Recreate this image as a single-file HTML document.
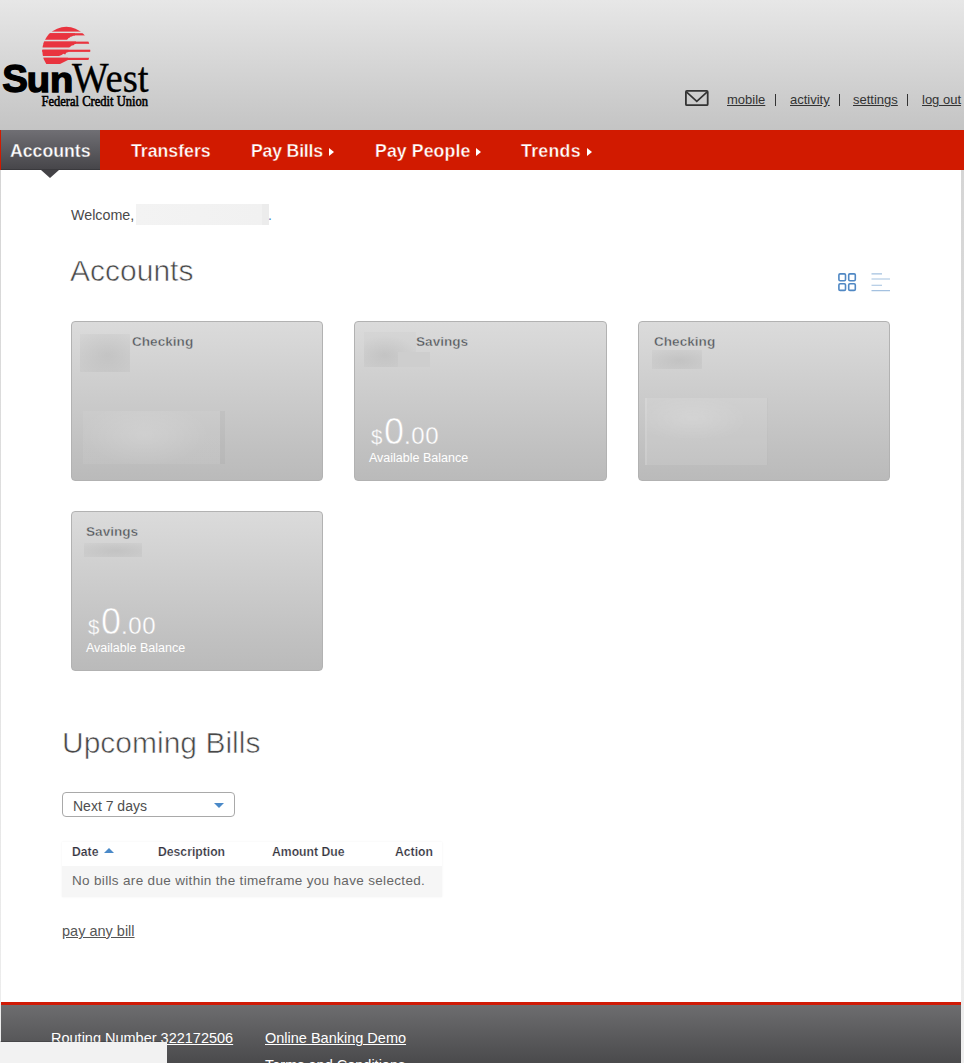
<!DOCTYPE html>
<html><head><meta charset="utf-8">
<style>
*{box-sizing:border-box;margin:0;padding:0}
html,body{width:964px;height:1063px;overflow:hidden;background:#f0f0f0;font-family:"Liberation Sans",sans-serif}
.a{position:absolute;white-space:nowrap}
#hdr{left:0;top:0;width:964px;height:130px;background:linear-gradient(#e7e7e7,#c4c4c4)}
#nav{left:0;top:130px;width:964px;height:40px;background:#d11a00}
#act{left:1px;top:130px;width:99px;height:40px;background:linear-gradient(#706f74,#47464a);border-bottom:1px solid #3a393d}
#arrow{left:41px;top:170px;width:0;height:0;border-left:9px solid transparent;border-right:9px solid transparent;border-top:8px solid #444347}
.nv{color:#fff;font-weight:bold;font-size:17.7px;line-height:40px;top:131px;-webkit-text-stroke:0.35px #d11a00}
.tri{width:0;height:0;border-top:4px solid transparent;border-bottom:4px solid transparent;border-left:5.5px solid #fff;top:148px}
#main{left:1px;top:170px;width:960px;height:832px;background:#fff}
#bgg{left:0;top:170px;width:964px;height:893px;background:linear-gradient(#d5d5d5,#eeeeee)}
.lk{font-size:13px;color:#333;text-decoration:underline;line-height:16px;top:92px}
.sep{width:1px;height:12px;background:#333;top:94px}
.h1{font-size:30px;color:#484848;line-height:34px;-webkit-text-stroke:0.6px #fff}
.card{width:252px;height:160px;border:1px solid #b2b2b2;border-radius:4px;background:linear-gradient(#dbdbdb,#bababa)}
.ct{font-size:13.6px;font-weight:bold;color:#53575c;line-height:18px;-webkit-text-stroke:0.4px #d7d7d7}
.dk{background:radial-gradient(ellipse at 55% 55%,rgba(0,0,0,.08),rgba(0,0,0,.02))}
.lt{background:radial-gradient(ellipse 45% 60% at 45% 45%,rgba(255,255,255,.2),rgba(255,255,255,.06))}
.bal{color:#fff;line-height:40px}
.bal .big{-webkit-text-stroke:0.6px #c6c6c6}
.bal .sm{-webkit-text-stroke:0.3px #c6c6c6}
.avail{font-size:12.5px;color:#fff;line-height:14px}
#foot{left:1px;top:1002px;width:960px;height:61px;border-top:3px solid #cf1a06;background:linear-gradient(#6d6d6f,#4a4a4c)}
.ft{color:#fff;font-size:14.5px;line-height:18px}
.th{font-size:12.2px;font-weight:bold;color:#33333d;line-height:16px;top:844px;-webkit-text-stroke:0.2px #fff}
</style></head><body>
<div id="hdr" class="a"></div>
<div id="nav" class="a"></div>
<div id="act" class="a"></div>
<div id="bgg" class="a"></div>
<div id="main" class="a"></div>
<div id="arrow" class="a"></div>
<div class="a nv" style="left:10px;-webkit-text-stroke:0.35px #5c5b5f">Accounts</div>
<div class="a nv" style="left:131px">Transfers</div>
<div class="a nv" style="left:251px;letter-spacing:-0.2px">Pay Bills</div>
<div class="a tri" style="left:329px"></div>
<div class="a nv" style="left:375px;letter-spacing:0.1px">Pay People</div>
<div class="a tri" style="left:476px"></div>
<div class="a nv" style="left:521px;letter-spacing:0.3px">Trends</div>
<div class="a tri" style="left:587px"></div>

<!-- logo -->
<svg class="a" style="left:0;top:20px" width="160" height="95" viewBox="0 20 160 95">
<defs><clipPath id="sun"><circle cx="66.3" cy="50.8" r="24"/></clipPath></defs>
<g clip-path="url(#sun)" fill="#e9343f">
<rect x="40" y="26" width="52" height="5.6"/>
<rect x="40" y="33.2" width="52" height="2.2"/>
<polygon points="40,33.2 75,33.2 75,35.4 73,35.8 72,36.6 70.5,36.8 69.5,37.8 68.3,38.2 67.6,39.2 66.8,39.7 40,39.7"/>
<rect x="40" y="41.6" width="52" height="2.2"/>
<polygon points="40,41.6 76,41.6 76,43.8 74.5,44.2 73.5,45.2 71.8,45.6 70.6,46.6 69.2,47.5 40,47.5"/>
<rect x="40" y="49.7" width="52" height="2.2"/>
<polygon points="40,49.7 68.5,49.7 68.5,51.9 66.2,52.8 65.2,54.6 63.4,53.8 61.6,55 59,55.9 40,55.9"/>
<rect x="40" y="57.8" width="52" height="2.2"/>
<polygon points="40,57.8 68,57.8 68,60 64,62 60,64 40,64"/>
</g>
<text x="2.2" y="92.2" font-family="Liberation Sans" font-weight="bold" font-size="38.5" fill="#000" stroke="#000" stroke-width="1.3">S</text><text x="26.8" y="92.2" font-family="Liberation Sans" font-weight="bold" font-size="35.5" fill="#000" stroke="#000" stroke-width="1.4" textLength="46.5" lengthAdjust="spacingAndGlyphs">un</text>
<text x="72" y="91.8" font-family="Liberation Serif" font-size="42" fill="#000" stroke="#000" stroke-width="0.35" textLength="76.5" lengthAdjust="spacingAndGlyphs">West</text>
<text x="41.5" y="106.3" font-family="Liberation Serif" font-size="14.8" fill="#000" stroke="#000" stroke-width="0.6" textLength="106.5" lengthAdjust="spacingAndGlyphs">Federal Credit Union</text>
</svg>
<!-- header links -->
<svg class="a" style="left:684px;top:89px" width="26" height="19" viewBox="0 0 26 19"><rect x="1.9" y="1.9" width="21.8" height="14.3" rx="1" fill="none" stroke="#333" stroke-width="1.8"/><path d="M2.4 2.9 L12.8 12.3 L23.2 2.9" fill="none" stroke="#333" stroke-width="1.7"/></svg>
<div class="a lk" style="left:727px">mobile</div>
<div class="a sep" style="left:775px"></div>
<div class="a lk" style="left:790px">activity</div>
<div class="a sep" style="left:839px"></div>
<div class="a lk" style="left:853px">settings</div>
<div class="a sep" style="left:907px"></div>
<div class="a lk" style="left:922px">log out</div>

<!-- welcome -->
<div class="a" style="left:71px;top:206px;font-size:14.3px;color:#4a4a4a;line-height:18px">Welcome,</div>
<div class="a" style="left:136px;top:204px;width:133px;height:21px;background:linear-gradient(90deg,#f3f3f3,#f1f1f1 95%,#ececec 95%)"></div>
<div class="a" style="left:268px;top:206px;font-size:14px;color:#4a87c5;line-height:18px">.</div>

<div class="a h1" style="left:70px;top:254px">Accounts</div>

<!-- view icons -->
<svg class="a" style="left:837px;top:272px" width="20" height="20" viewBox="0 0 20 20" fill="none" stroke="#5088c4" stroke-width="1.6"><rect x="1.9" y="1.9" width="6.6" height="6.8" rx="1.2"/><rect x="11.7" y="1.9" width="6.6" height="6.8" rx="1.2"/><rect x="1.9" y="11.8" width="6.6" height="6.6" rx="1.2"/><rect x="11.7" y="11.8" width="6.6" height="6.6" rx="1.2"/></svg>
<svg class="a" style="left:870px;top:272px" width="22" height="20" viewBox="0 0 22 20" stroke="#a4c1e0" stroke-width="1.15"><path d="M1.5 1.8H12M1.5 7H20M1.5 13.2H12M1.5 18.6H20"/></svg>

<!-- cards -->
<div class="a card" style="left:71px;top:321px"></div>
<div class="a card" style="left:354px;top:321px;width:253px"></div>
<div class="a card" style="left:638px;top:321px"></div>
<div class="a card" style="left:71px;top:511px"></div>
<div class="a dk" style="left:80px;top:334px;width:50px;height:38px"></div>
<div class="a lt" style="left:83px;top:411px;width:137px;height:53px"></div>
<div class="a" style="left:220px;top:411px;width:5px;height:53px;background:rgba(0,0,0,.03)"></div>
<div class="a ct" style="left:132px;top:333px">Checking</div>
<div class="a" style="left:364px;top:332px;width:52px;height:35px;background:radial-gradient(ellipse 60% 55% at 40% 65%,rgba(0,0,0,.08),rgba(0,0,0,.02))"></div>
<div class="a" style="left:398px;top:352px;width:32px;height:15px;background:#cecece"></div>
<div class="a ct" style="left:416px;top:333px">Savings</div>
<div class="a ct" style="left:654px;top:333px">Checking</div>
<div class="a dk" style="left:652px;top:350px;width:50px;height:19px"></div>
<div class="a" style="left:645px;top:398px;width:123px;height:67px;background:radial-gradient(ellipse 45% 35% at 38% 30%,rgba(255,255,255,.22),rgba(255,255,255,.09));border-left:2px solid rgba(255,255,255,.12);border-right:1px solid rgba(0,0,0,.04)"></div>
<div class="a ct" style="left:86px;top:523px">Savings</div>
<div class="a dk" style="left:84px;top:543px;width:58px;height:14px"></div>

<div class="a bal" style="left:371px;top:412px"><span class="sm" style="font-size:20.5px;margin-right:1.5px">$</span><span class="big" style="font-size:36px">0</span><span class="sm" style="font-size:24px;letter-spacing:0.6px">.00</span></div>
<div class="a avail" style="left:369px;top:451px">Available Balance</div>
<div class="a bal" style="left:88px;top:602px"><span class="sm" style="font-size:20.5px;margin-right:1.5px">$</span><span class="big" style="font-size:36px">0</span><span class="sm" style="font-size:24px;letter-spacing:0.6px">.00</span></div>
<div class="a avail" style="left:86px;top:641px">Available Balance</div>

<!-- upcoming bills -->
<div class="a h1" style="left:62px;top:726px">Upcoming Bills</div>
<div class="a" style="left:62px;top:792px;width:173px;height:25px;border:1px solid #a9a9a9;border-radius:4px;background:#fff"></div>
<div class="a" style="left:73px;top:798px;font-size:14px;color:#4e4e4e;line-height:16px">Next 7 days</div>
<div class="a" style="left:214px;top:803px;width:0;height:0;border-left:5px solid transparent;border-right:5px solid transparent;border-top:5px solid #4a89c8"></div>

<div class="a" style="left:62px;top:842px;width:380px;height:55px;background:#fff;box-shadow:0 0 2px rgba(0,0,0,.06)"></div>
<div class="a" style="left:62px;top:866px;width:380px;height:31px;background:#f6f6f6"></div>
<div class="a th" style="left:72px">Date</div>
<div class="a" style="left:104px;top:848px;width:0;height:0;border-left:5px solid transparent;border-right:5px solid transparent;border-bottom:5px solid #4a89c8"></div>
<div class="a th" style="left:158px">Description</div>
<div class="a th" style="left:272px">Amount Due</div>
<div class="a th" style="left:395px">Action</div>
<div class="a" style="left:72px;top:873px;font-size:13.5px;color:#666;letter-spacing:0.33px;line-height:16px">No bills are due within the timeframe you have selected.</div>
<div class="a" style="left:62px;top:923px;font-size:14.5px;color:#555;text-decoration:underline;line-height:16px">pay any bill</div>

<!-- main footer -->
<div id="foot" class="a"></div>
<div class="a ft" style="left:51px;top:1029px">Routing Number <u>322172506</u></div>
<div class="a ft" style="left:265px;top:1029px"><u>Online Banking Demo</u></div>
<div class="a ft" style="left:265px;top:1056px">Terms and Conditions</div>
<div class="a" style="left:0;top:1042px;width:167px;height:21px;background:#f2f2f2;box-shadow:0 -1px 0 rgba(0,0,0,.18)"></div>
</body></html>
